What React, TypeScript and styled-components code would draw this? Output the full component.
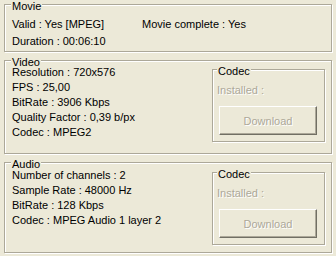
import styled, { createGlobalStyle } from 'styled-components';

const GlobalStyle = createGlobalStyle`
	body {
		margin: 0;
		background: #ece9d8;
		font-family: 'Liberation Sans', Arial, sans-serif;
		font-size: 11px;
		color: #000;
	}
`;

const Page = styled.div`
	display: flex;
	flex-direction: column;
	gap: 8px;
	padding: 4px 0 0 4px;
	width: 336px;
	height: 256px;
	box-sizing: border-box;
	background: #ece9d8;
`;

// etched frame like the old win32 group box
const Group = styled.div<{ $height: number; $pad: number }>`
	position: relative;
	box-sizing: border-box;
	width: 328px;
	height: ${(p) => p.$height}px;
	border: 1px solid #aca899;
	box-shadow: inset 1px 1px #fff, 1px 1px #fff;
	padding: ${(p) => p.$pad}px 6px 0 7px;
	display: flex;
	justify-content: space-between;
	align-items: flex-start;
`;

const Caption = styled.span<{ $inset: number }>`
	position: absolute;
	top: -2px;
	left: ${(p) => p.$inset}px;
	padding: 0 1px;
	line-height: 7px;
	background: #ece9d8;
	color: #000;
`;

const MovieGrid = styled.div`
	display: grid;
	grid-template-columns: 130px 1fr;
	line-height: 17px;
	width: 100%;
`;

const Lines = styled.div`
	display: flex;
	flex-direction: column;
	gap: 2px;
	line-height: 13px;
	white-space: nowrap;
`;

const CodecBox = styled.div`
	position: relative;
	box-sizing: border-box;
	width: 113px;
	margin-top: 3px;
	border: 1px solid #aca899;
	box-shadow: inset 1px 1px #fff, 1px 1px #fff;
	padding: 14px 6px 6px 4px;
	display: flex;
	flex-direction: column;
`;

const Disabled = styled.span`
	line-height: 13px;
	color: #aca899;
	text-shadow: 1px 1px #fff;
`;

const Button = styled.button`
	box-sizing: border-box;
	width: 98px;
	height: 29px;
	margin: 9px 0 0 2px;
	padding: 0;
	font: inherit;
	color: #aca899;
	text-shadow: 1px 1px #fff;
	background: #ece9d8;
	border: 1px solid;
	border-color: #fff #716f64 #716f64 #fff;
	box-shadow: inset -1px -1px #aca899;
	cursor: default;
`;

const Codec = () => (
	<CodecBox>
		<Caption $inset={4}>Codec</Caption>
		<Disabled>Installed :</Disabled>
		<Button disabled>Download</Button>
	</CodecBox>
);

export default function App() {
	return (
		<>
			<GlobalStyle />
			<Page>
				<Group $height={48} $pad={11}>
					<Caption $inset={6}>Movie</Caption>
					<MovieGrid>
						<span>Valid : Yes [MPEG]</span>
						<span>Movie complete : Yes</span>
						<span>Duration : 00:06:10</span>
					</MovieGrid>
				</Group>

				<Group $height={94} $pad={5}>
					<Caption $inset={6}>Video</Caption>
					<Lines>
						<span>Resolution : 720x576</span>
						<span>FPS : 25,00</span>
						<span>BitRate : 3906 Kbps</span>
						<span>Quality Factor : 0,39 b/px</span>
						<span>Codec : MPEG2</span>
					</Lines>
					<Codec />
				</Group>

				<Group $height={91} $pad={6}>
					<Caption $inset={6}>Audio</Caption>
					<Lines>
						<span>Number of channels : 2</span>
						<span>Sample Rate : 48000 Hz</span>
						<span>BitRate : 128 Kbps</span>
						<span>Codec : MPEG Audio 1 layer 2</span>
					</Lines>
					<Codec />
				</Group>
			</Page>
		</>
	);
}
